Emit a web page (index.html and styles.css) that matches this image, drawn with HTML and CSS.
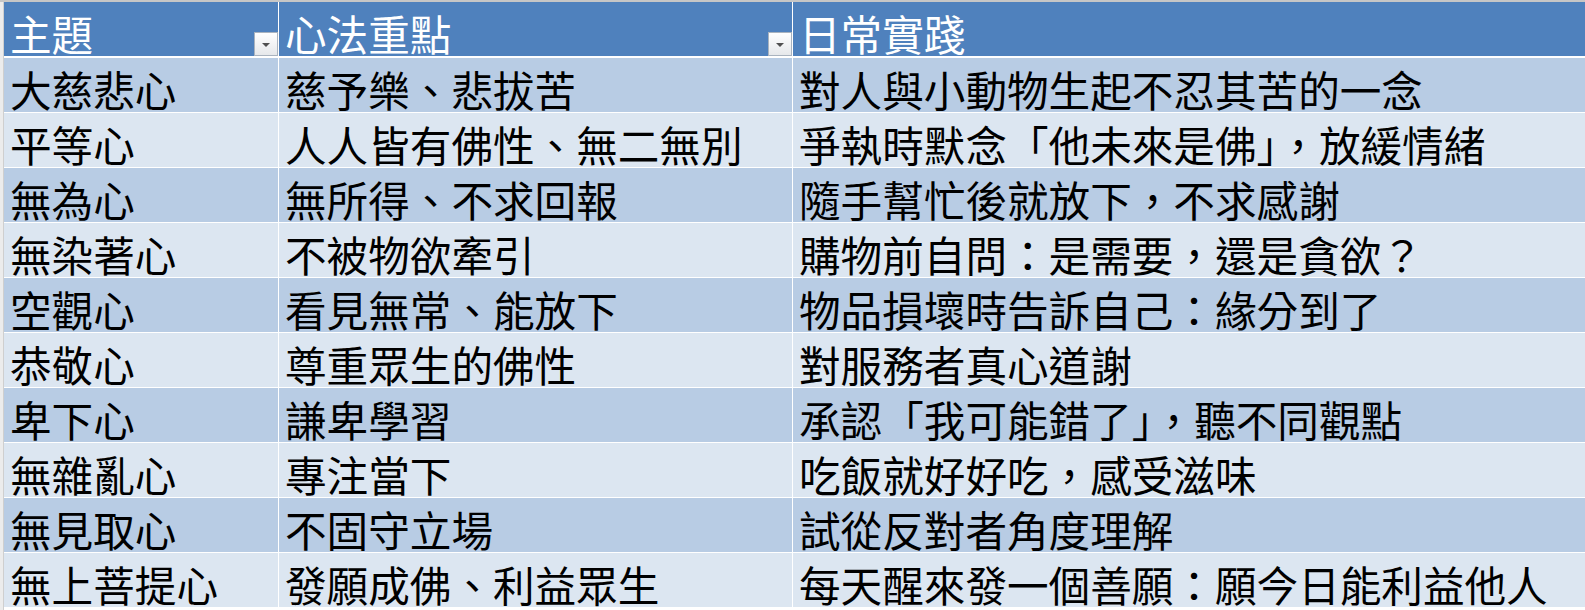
FILE: index.html
```html
<!DOCTYPE html>
<html lang="zh-Hant">
<head>
<meta charset="utf-8">
<title>心法</title>
<link rel="stylesheet" href="styles.css">
</head>
<body>
<div class="sheet">
  <div class="rowhdr"></div>
  <div class="table">
    <div class="row head">
      <div class="cell"><span class="txt">主題</span><span class="dd"></span></div>
      <div class="cell"><span class="txt">心法重點</span><span class="dd"></span></div>
      <div class="cell"><span class="txt">日常實踐</span></div>
    </div>
    <div class="row dark"><div class="cell"><span class="txt">大慈悲心</span></div><div class="cell"><span class="txt">慈予樂、悲拔苦</span></div><div class="cell"><span class="txt">對人與小動物生起不忍其苦的一念</span></div></div>
    <div class="row light"><div class="cell"><span class="txt">平等心</span></div><div class="cell"><span class="txt">人人皆有佛性、無二無別</span></div><div class="cell"><span class="txt">爭執時默念「他未來是佛」，放緩情緒</span></div></div>
    <div class="row dark"><div class="cell"><span class="txt">無為心</span></div><div class="cell"><span class="txt">無所得、不求回報</span></div><div class="cell"><span class="txt">隨手幫忙後就放下，不求感謝</span></div></div>
    <div class="row light"><div class="cell"><span class="txt">無染著心</span></div><div class="cell"><span class="txt">不被物欲牽引</span></div><div class="cell"><span class="txt">購物前自問：是需要，還是貪欲？</span></div></div>
    <div class="row dark"><div class="cell"><span class="txt">空觀心</span></div><div class="cell"><span class="txt">看見無常、能放下</span></div><div class="cell"><span class="txt">物品損壞時告訴自己：緣分到了</span></div></div>
    <div class="row light"><div class="cell"><span class="txt">恭敬心</span></div><div class="cell"><span class="txt">尊重眾生的佛性</span></div><div class="cell"><span class="txt">對服務者真心道謝</span></div></div>
    <div class="row dark"><div class="cell"><span class="txt">卑下心</span></div><div class="cell"><span class="txt">謙卑學習</span></div><div class="cell"><span class="txt">承認「我可能錯了」，聽不同觀點</span></div></div>
    <div class="row light"><div class="cell"><span class="txt">無雜亂心</span></div><div class="cell"><span class="txt">專注當下</span></div><div class="cell"><span class="txt">吃飯就好好吃，感受滋味</span></div></div>
    <div class="row dark"><div class="cell"><span class="txt">無見取心</span></div><div class="cell"><span class="txt">不固守立場</span></div><div class="cell"><span class="txt">試從反對者角度理解</span></div></div>
    <div class="row light"><div class="cell"><span class="txt">無上菩提心</span></div><div class="cell"><span class="txt">發願成佛、利益眾生</span></div><div class="cell"><span class="txt">每天醒來發一個善願：願今日能利益他人</span></div></div>
  </div>
</div>
</body>
</html>
```

FILE: styles.css
```css
html, body {
  margin: 0;
  padding: 0;
  background: #ffffff;
  overflow: hidden;
}

.sheet {
  display: flex;
  width: 1585px;
  height: 610px;
  border-top: 2px solid #c6c6c6;
  box-sizing: border-box;
}

.rowhdr {
  width: 3px;
  flex: none;
  background: #ececec;
  border-right: 1px solid #cfcfcf;
}

.table {
  flex: 1;
  display: flex;
  flex-direction: column;
}

.row {
  display: grid;
  grid-template-columns: 274px 513px 1fr;
  column-gap: 1px;
  height: 54px;
  margin-bottom: 1px;
}

.row.head {
  margin-bottom: 2px;
}

.cell {
  position: relative;
  display: flex;
  align-items: flex-end;
  padding: 0 0 1px 6px;
  font-family: "Noto Sans CJK TC", "Noto Sans CJK SC", sans-serif;
  font-size: 41.6px;
  line-height: 1;
  color: #000000;
  white-space: nowrap;
}

.txt {
  display: block;
  line-height: 1;
}

.head .cell {
  background: #4f81bd;
  color: #ffffff;
}

.dark .cell {
  background: #b8cce4;
}

.light .cell {
  background: #dce6f1;
}

.dd {
  position: absolute;
  right: 0;
  bottom: 0;
  width: 22px;
  height: 22px;
  border: 1px solid #a9b3bf;
  background: linear-gradient(#ffffff, #e6e8eb);
}

.dd::after {
  content: "";
  position: absolute;
  left: 7px;
  top: 10px;
  border-left: 4px solid transparent;
  border-right: 4px solid transparent;
  border-top: 4px solid #505050;
}
```
